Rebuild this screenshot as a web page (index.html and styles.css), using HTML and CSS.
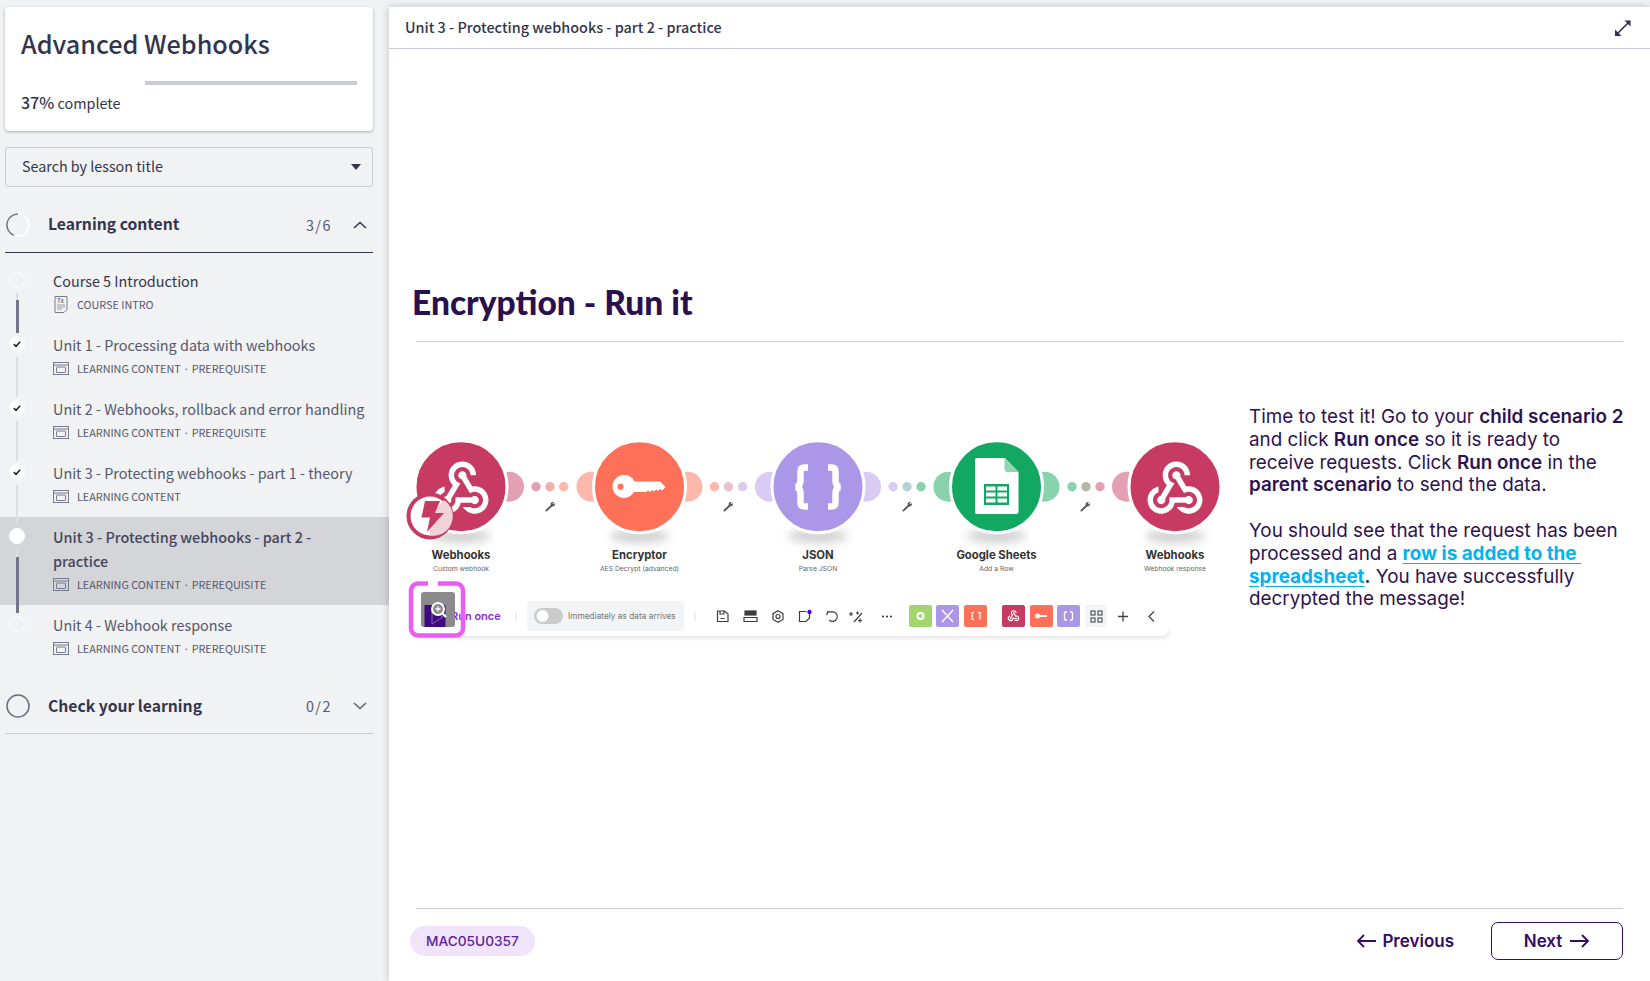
FILE: index.html
```html
<!DOCTYPE html>
<html lang="en">
<head>
    <meta charset="UTF-8">
    <meta name="viewport" content="width=device-width, initial-scale=1.0">
    <title>Advanced Webhooks</title>
    <link rel="stylesheet" href="styles.css">
</head>
<body>
    <svg class="defs" width="0" height="0">
        <symbol id="ic-lesson" viewBox="0 0 16 13">
            <rect x="0.5" y="0.5" width="15" height="12" fill="none" stroke="#777a8c"/>
            <path d="M0.5 3h15" stroke="#777a8c"/>
            <rect x="3.5" y="5" width="9" height="5.5" rx="0.5" fill="none" stroke="#777a8c"/>
        </symbol>
        <symbol id="ic-check" viewBox="0 0 16 16">
            <circle cx="8" cy="8" r="8" fill="#fff"/>
            <path d="M4.8 8.2l2.2 2.1 4.2-4.6" fill="none" stroke="#1d1f33" stroke-width="1.6"/>
        </symbol>
        <symbol id="ic-hook" viewBox="0 0 24 24">
            <path fill="#fff" d="M10 15l5.88 0c0.27-0.31 0.67-0.5 1.12-0.5c0.83 0 1.5 0.67 1.5 1.5c0 0.83-0.67 1.5-1.5 1.5c-0.44 0-0.84-0.19-1.12-0.5l-3.98 0c-0.46 2.28-2.48 4-4.9 4c-2.76 0-5-2.24-5-5c0-2.42 1.72-4.44 4-4.9l0 2.07c-1.16 0.41-2 1.53-2 2.83c0 1.65 1.35 3 3 3s3-1.35 3-3V15z M12.5 4c1.65 0 3 1.35 3 3h2c0-2.76-2.24-5-5-5l0 0c-2.76 0-5 2.24-5 5c0 1.43 0.6 2.71 1.55 3.62l-2.35 3.9C6.01 14.72 5.5 15.3 5.5 16c0 0.83 0.67 1.5 1.5 1.5s1.5-0.67 1.5-1.5c0-0.16-0.02-0.31-0.07-0.45l3.38-5.63C10.49 9.61 9.5 8.42 9.5 7C9.5 5.35 10.85 4 12.5 4z M17 13c-0.64 0-1.23 0.2-1.72 0.54l-3.05-5.07C11.53 8.35 11 7.74 11 7c0-0.83 0.67-1.5 1.5-1.5S14 6.17 14 7c0 0.15-0.02 0.29-0.06 0.43l2.19 3.65C16.41 11.03 16.7 11 17 11l0 0c2.76 0 5 2.24 5 5c0 2.76-2.24 5-5 5c-1.85 0-3.47-1.01-4.33-2.5l2.67 0C15.82 18.81 16.39 19 17 19c1.65 0 3-1.35 3-3S18.65 13 17 13z"/>
        </symbol>
        <symbol id="ic-wrench" viewBox="0 0 12 12">
            <path d="M1.5 10.5L7 5.2" stroke="#555" stroke-width="2" stroke-linecap="round"/>
            <path d="M6 3.6a3 3 0 0 1 4-2.4L8.3 3l0.8 0.9 1.8-1.6a3 3 0 0 1-3 3.8z" fill="#555"/>
        </symbol>
    </svg>

    <div class="page">
        <aside class="sidebar">
            <div class="course-card">
                <h1>Advanced Webhooks</h1>
                <div class="progress"><div class="progress-fill"></div></div>
                <p class="progress-text"><strong>37%</strong> complete</p>
            </div>

            <div class="search">
                <span>Search by lesson title</span>
                <span class="caret"></span>
            </div>

            <div class="section-head">
                <svg class="ring" width="24" height="24" viewBox="0 0 24 24">
                    <circle cx="12" cy="12" r="11" fill="none" stroke="#fff" stroke-width="1.5"/>
                    <path d="M12 1A11 11 0 0 0 7.8 22.2" fill="none" stroke="#6c6e80" stroke-width="1.5"/>
                </svg>
                <span class="section-title">Learning content</span>
                <span class="section-count">3/6</span>
                <svg class="chev" width="14" height="8" viewBox="0 0 14 8"><path d="M1 7l6-5.5L13 7" fill="none" stroke="#33354d" stroke-width="1.6"/></svg>
            </div>

            <ul class="lessons">
                <li class="lesson">
                    <div class="rail">
                        <span class="dot"></span>
                        <span class="line"><span class="line-fill fill-first"></span></span>
                    </div>
                    <div class="lesson-body">
                        <div class="lesson-title dark">Course 5 Introduction</div>
                        <div class="lesson-meta">
                            <svg class="doc-icon" width="16" height="17" viewBox="0 0 13 17">
                                <path d="M0.5 0.5h12v13l-3 3h-9z" fill="none" stroke="#777a8c"/>
                                <text x="2.4" y="6.5" class="doc-tx">Tx</text>
                                <path d="M2.5 9h8M2.5 11h8M2.5 13h5" stroke="#9a9caa"/>
                            </svg>
                            <span>COURSE INTRO</span>
                        </div>
                    </div>
                </li>
                <li class="lesson">
                    <div class="rail">
                        <svg class="dot-svg" width="16" height="16"><use href="#ic-check"/></svg>
                        <span class="line"></span>
                    </div>
                    <div class="lesson-body">
                        <div class="lesson-title">Unit 1 - Processing data with webhooks</div>
                        <div class="lesson-meta">
                            <svg width="16" height="13"><use href="#ic-lesson"/></svg>
                            <span>LEARNING CONTENT · PREREQUISITE</span>
                        </div>
                    </div>
                </li>
                <li class="lesson">
                    <div class="rail">
                        <svg class="dot-svg" width="16" height="16"><use href="#ic-check"/></svg>
                        <span class="line"></span>
                    </div>
                    <div class="lesson-body">
                        <div class="lesson-title">Unit 2 - Webhooks, rollback and error handling</div>
                        <div class="lesson-meta">
                            <svg width="16" height="13"><use href="#ic-lesson"/></svg>
                            <span>LEARNING CONTENT · PREREQUISITE</span>
                        </div>
                    </div>
                </li>
                <li class="lesson">
                    <div class="rail">
                        <svg class="dot-svg" width="16" height="16"><use href="#ic-check"/></svg>
                        <span class="line"></span>
                    </div>
                    <div class="lesson-body">
                        <div class="lesson-title">Unit 3 - Protecting webhooks - part 1 - theory</div>
                        <div class="lesson-meta">
                            <svg width="16" height="13"><use href="#ic-lesson"/></svg>
                            <span>LEARNING CONTENT</span>
                        </div>
                    </div>
                </li>
                <li class="lesson active">
                    <div class="rail">
                        <span class="dot solid"></span>
                        <span class="line"><span class="line-fill fill-active"></span></span>
                    </div>
                    <div class="lesson-body">
                        <div class="lesson-title">Unit 3 - Protecting webhooks - part 2 - practice</div>
                        <div class="lesson-meta">
                            <svg width="16" height="13"><use href="#ic-lesson"/></svg>
                            <span>LEARNING CONTENT · PREREQUISITE</span>
                        </div>
                    </div>
                </li>
                <li class="lesson">
                    <div class="rail">
                        <span class="dot"></span>
                    </div>
                    <div class="lesson-body">
                        <div class="lesson-title">Unit 4 - Webhook response</div>
                        <div class="lesson-meta">
                            <svg width="16" height="13"><use href="#ic-lesson"/></svg>
                            <span>LEARNING CONTENT · PREREQUISITE</span>
                        </div>
                    </div>
                </li>
            </ul>

            <div class="section-head closed">
                <svg class="ring" width="24" height="24" viewBox="0 0 24 24">
                    <circle cx="12" cy="12" r="11" fill="none" stroke="#6c6e80" stroke-width="1.5"/>
                </svg>
                <span class="section-title">Check your learning</span>
                <span class="section-count">0/2</span>
                <svg class="chev" width="14" height="8" viewBox="0 0 14 8"><path d="M1 1l6 5.5L13 1" fill="none" stroke="#5c5e72" stroke-width="1.4"/></svg>
            </div>
        </aside>

        <main class="main">
            <header class="main-head">
                <span class="main-head-title">Unit 3 - Protecting webhooks - part 2 - practice</span>
                <svg width="18" height="18" viewBox="0 0 18 18">
                    <path d="M2 16L16 2" stroke="#2f3150" stroke-width="1.6"/>
                    <path d="M10.5 1.5h6v6zM1 10.5v6.500h6.500z" fill="#2f3150"/>
                </svg>
            </header>

            <div class="content">
                <h2>Encryption - Run it</h2>
                <hr class="rule">

                <div class="lesson-row">
                    <svg class="scenario" width="840" height="220" viewBox="400 430 840 220">
                        <defs>
                            <filter id="blur6" x="-50%" y="-100%" width="200%" height="300%"><feGaussianBlur stdDeviation="5"/></filter>
                            <filter id="blur-bar" x="-5%" y="-50%" width="110%" height="200%"><feGaussianBlur stdDeviation="3"/></filter>
                        </defs>

                        <!-- toolbar -->
                        <rect x="420" y="630" width="748" height="7" fill="#000" opacity="0.14" filter="url(#blur-bar)"/>
                        <rect x="405" y="596" width="763" height="40" rx="6" fill="#fff"/>

                        <!-- shadows under the modules -->
                        <ellipse cx="461" cy="536" rx="30" ry="7" fill="#000" opacity="0.18" filter="url(#blur6)"/>
                        <ellipse cx="639.500" cy="536" rx="30" ry="7" fill="#000" opacity="0.18" filter="url(#blur6)"/>
                        <ellipse cx="818" cy="536" rx="30" ry="7" fill="#000" opacity="0.18" filter="url(#blur6)"/>
                        <ellipse cx="996.500" cy="536" rx="30" ry="7" fill="#000" opacity="0.18" filter="url(#blur6)"/>
                        <ellipse cx="1175" cy="536" rx="30" ry="7" fill="#000" opacity="0.18" filter="url(#blur6)"/>

                        <!-- connector ends -->
                        <circle cx="509" cy="486.700" r="15" fill="#e39fb4"/>
                        <circle cx="591.500" cy="486.700" r="15" fill="#fdb8a9"/>
                        <circle cx="687.500" cy="486.700" r="15" fill="#fdb8a9"/>
                        <circle cx="770" cy="486.700" r="15" fill="#d9cbf3"/>
                        <circle cx="866" cy="486.700" r="15" fill="#d9cbf3"/>
                        <circle cx="948.500" cy="486.700" r="15" fill="#88d2ae"/>
                        <circle cx="1044.500" cy="486.700" r="15" fill="#88d2ae"/>
                        <circle cx="1127" cy="486.700" r="15" fill="#e39fb4"/>

                        <!-- dots -->
                        <circle cx="536" cy="486.700" r="4.700" fill="#e39fb4"/>
                        <circle cx="550" cy="486.700" r="4.700" fill="#f2aeac"/>
                        <circle cx="563.700" cy="486.700" r="4.700" fill="#fdb8a9"/>
                        <circle cx="714.500" cy="486.700" r="4.700" fill="#fdb8a9"/>
                        <circle cx="728.500" cy="486.700" r="4.700" fill="#ecc0cc"/>
                        <circle cx="742.500" cy="486.700" r="4.700" fill="#d9cbf3"/>
                        <circle cx="893" cy="486.700" r="4.700" fill="#d9cbf3"/>
                        <circle cx="907" cy="486.700" r="4.700" fill="#b2d1d8"/>
                        <circle cx="921" cy="486.700" r="4.700" fill="#88d2ae"/>
                        <circle cx="1072" cy="486.700" r="4.700" fill="#88d2ae"/>
                        <circle cx="1086" cy="486.700" r="4.700" fill="#b6b6a9"/>
                        <circle cx="1100" cy="486.700" r="4.700" fill="#e39fb4"/>

                        <use href="#ic-wrench" x="545" y="501" width="11" height="11"/>
                        <use href="#ic-wrench" x="723" y="501" width="11" height="11"/>
                        <use href="#ic-wrench" x="902" y="501" width="11" height="11"/>
                        <use href="#ic-wrench" x="1080" y="501" width="11" height="11"/>

                        <!-- modules -->
                        <circle cx="461" cy="486.700" r="46" fill="#c73a63" stroke="#fff" stroke-width="3"/>
                        <circle cx="639.500" cy="486.700" r="46" fill="#ff7059" stroke="#fff" stroke-width="3"/>
                        <circle cx="818" cy="486.700" r="46" fill="#ab97e8" stroke="#fff" stroke-width="3"/>
                        <circle cx="996.500" cy="486.700" r="46" fill="#12a862" stroke="#fff" stroke-width="3"/>
                        <circle cx="1175" cy="486.700" r="46" fill="#c73a63" stroke="#fff" stroke-width="3"/>

                        <use href="#ic-hook" x="428" y="456" width="66" height="66"/>
                        <use href="#ic-hook" x="1142" y="456" width="66" height="66"/>

                        <!-- key -->
                        <path fill="#fff" d="M625 475a11.500 11.500 0 0 1 9.500 6.500h25.500l5.500 5.500l-3.500 3.500l-2-1.500l-2 2l-2-1.500l-2 2l-2-1.500l-2 2l-2-1.500l-2 1.500h-12a11.500 11.500 0 1 1-9.500-17z"/>
                        <circle cx="620.500" cy="486.700" r="3" fill="#ff7059"/>

                        <!-- braces -->
                        <path d="M808 467.500h-3.500q-4 0 -4 4v9q0 5.500 -4.500 6.500q4.500 1 4.500 6.500v9q0 4 4 4h3.500M828 467.500h3.500q4 0 4 4v9q0 5.500 4.500 6.500q-4.500 1 -4.500 6.500v9q0 4 -4 4h-3.500" fill="none" stroke="#fff" stroke-width="6.500"/>

                        <!-- sheet -->
                        <path d="M977 458h28l13.500 14v40a2 2 0 0 1-2 2h-39.500a2 2 0 0 1-2-2v-52a2 2 0 0 1 2-2z" fill="#fff"/>
                        <path d="M1004.500 458l14 14h-11a3 3 0 0 1-3-3z" fill="#8fd6b1"/>
                        <rect x="984" y="484" width="25" height="21" fill="#12a862"/>
                        <g fill="#fff">
                            <rect x="986" y="486.500" width="9.500" height="4"/>
                            <rect x="997.500" y="486.500" width="9.500" height="4"/>
                            <rect x="986" y="492.500" width="9.500" height="4"/>
                            <rect x="997.500" y="492.500" width="9.500" height="4"/>
                            <rect x="986" y="498.500" width="9.500" height="4"/>
                            <rect x="997.500" y="498.500" width="9.500" height="4"/>
                        </g>

                        <!-- trigger badge -->
                        <circle cx="430" cy="516" r="23.500" fill="#c73a63"/>
                        <circle cx="430" cy="516" r="19.500" fill="#fff"/>
                        <path d="M430 516L444 500A19.500 19.500 0 0 1 430 535.500z" fill="#f1d2db"/>
                        <path d="M425 501h15l-5 12h9l-17 19l3-14.500h-8.500z" fill="#c73a63"/>

                        <!-- labels -->
                        <text x="461" y="559" class="mod-name" text-anchor="middle">Webhooks</text>
                        <text x="461" y="571" class="mod-sub" text-anchor="middle">Custom webhook</text>
                        <text x="639.500" y="559" class="mod-name" text-anchor="middle">Encryptor</text>
                        <text x="639.500" y="571" class="mod-sub" text-anchor="middle">AES Decrypt (advanced)</text>
                        <text x="818" y="559" class="mod-name" text-anchor="middle">JSON</text>
                        <text x="818" y="571" class="mod-sub" text-anchor="middle">Parse JSON</text>
                        <text x="996.500" y="559" class="mod-name" text-anchor="middle">Google Sheets</text>
                        <text x="996.500" y="571" class="mod-sub" text-anchor="middle">Add a Row</text>
                        <text x="1175" y="559" class="mod-name" text-anchor="middle">Webhooks</text>
                        <text x="1175" y="571" class="mod-sub" text-anchor="middle">Webhook response</text>

                        <!-- toolbar contents -->
                        <text x="451" y="620" class="run-once">Run once</text>
                        <path d="M516 612v9M695 612v9" stroke="#ddd"/>
                        <rect x="527" y="601" width="157" height="30" rx="4" fill="#f3f4f6"/>
                        <rect x="534" y="608" width="29" height="16" rx="8" fill="#cbcbcb"/>
                        <circle cx="542.500" cy="616" r="6" fill="#fff"/>
                        <text x="568" y="619" class="run-mode">Immediately as data arrives</text>

                        <g fill="none" stroke="#3d3d3d" stroke-width="1.200">
                            <path d="M717.500 611h7l3.500 3v7.500h-10.500zM720 611v3h4v-3M720.500 618.500h4"/>
                            <rect x="745" y="611" width="11" height="4" fill="#3d3d3d"/>
                            <path d="M744 617.500h13v4h-13z"/>
                            <circle cx="778" cy="616.500" r="2"/>
                            <path d="M778 610.800l5 2.900v5.700l-5 2.900l-5-2.900v-5.700z"/>
                            <path d="M809.500 612v6l-3.500 3.500h-6.500v-10h7"/>
                            <path d="M828 612l-1.500 3M827 611.800h6a4.800 4.800 0 1 1-3.800 8.200"/>
                            <path d="M854 622l8-9M851 612v4M849 614h4M860 618.500v4M858 620.500h4M857.500 611.500v3M856 613h3"/>
                        </g>
                        <circle cx="809.500" cy="612" r="2.200" fill="#5a00c8"/>
                        <g fill="#3d3d3d">
                            <circle cx="883" cy="616.500" r="1.100"/>
                            <circle cx="887" cy="616.500" r="1.100"/>
                            <circle cx="891" cy="616.500" r="1.100"/>
                        </g>

                        <rect x="909" y="605" width="23" height="22" rx="2" fill="#a3d66e"/>
                        <circle cx="920.500" cy="616" r="3" fill="none" stroke="#fff" stroke-width="2"/>
                        <rect x="936" y="605" width="23" height="22" rx="2" fill="#ab97e8"/>
                        <path d="M942 610l4.500 5M953 610l-4.500 5M942 622l11-12M953 622l-5-5.500" stroke="#fff" stroke-width="1.500"/>
                        <rect x="964" y="605" width="23" height="22" rx="2" fill="#ff7059"/>
                        <path d="M974 612.500h-2v7h2M978 612.500h2v7" fill="none" stroke="#fff" stroke-width="1.200"/>
                        <rect x="1002" y="605" width="23" height="22" rx="2" fill="#c73a63"/>
                        <use href="#ic-hook" x="1006.500" y="609" width="14" height="14"/>
                        <rect x="1030" y="605" width="23" height="22" rx="2" fill="#ff7059"/>
                        <circle cx="1037.500" cy="616" r="2.500" fill="#fff"/>
                        <path d="M1039 616h8" stroke="#fff" stroke-width="2"/>
                        <rect x="1057" y="605" width="23" height="22" rx="2" fill="#ab97e8"/>
                        <path d="M1067 612h-1.500q-1 0 -1 1v6q0 1 1 1h1.500M1070 612h1.500q1 0 1 1v6q0 1 -1 1h-1.500" fill="none" stroke="#fff" stroke-width="1.300"/>
                        <rect x="1085" y="605" width="22" height="22" rx="2" fill="#f3f4f6"/>
                        <g fill="none" stroke="#555" stroke-width="1.200">
                            <rect x="1091" y="611" width="4" height="4"/>
                            <rect x="1098" y="611" width="4" height="4"/>
                            <rect x="1091" y="618" width="4" height="4"/>
                            <rect x="1098" y="618" width="4" height="4"/>
                        </g>
                        <path d="M1123 611.500v10M1118 616.500h10M1154 611.500l-5 5l5 5" fill="none" stroke="#444" stroke-width="1.300"/>

                        <!-- zoom overlay on the run button -->
                        <path d="M428 583.500h-10a7 7 0 0 0-7 7v38a7 7 0 0 0 7 7h38a7 7 0 0 0 7-7v-38a7 7 0 0 0-7-7h-18" fill="none" stroke="#ea5cf4" stroke-width="4.500"/>
                        <rect x="421" y="592" width="34" height="35" rx="3" fill="#8b8b8b"/>
                        <path d="M424.500 605h21v22h-21z" fill="#3e0a80"/>
                        <path d="M432 611l11 6l-11 7z" fill="none" stroke="#8b5fc0" stroke-width="1"/>
                        <circle cx="438" cy="609" r="6" fill="#8b8b8b" stroke="#fff" stroke-width="2"/>
                        <path d="M435.500 609h5M438 606.500v5" stroke="#fff" stroke-width="1.400"/>
                        <path d="M442.500 613.500l3.500 3.500" stroke="#fff" stroke-width="2.400"/>
                    </svg>

                    <div class="lesson-copy">
                        <p class="copy-para">
                            <span class="copy-line">Time to test it! Go to your <b>child scenario 2</b></span>
                            <span class="copy-line">and click <b>Run once</b> so it is ready to</span>
                            <span class="copy-line">receive requests. Click <b>Run once</b> in the</span>
                            <span class="copy-line"><b>parent scenario</b> to send the data.</span>
                        </p>
                        <p class="copy-para">
                            <span class="copy-line">You should see that the request has been</span>
                            <span class="copy-line">processed and a <a href="#" class="copy-link">row is added to the&nbsp;</a></span>
                            <span class="copy-line"><a href="#" class="copy-link">spreadsheet</a><b>.</b> You have successfully</span>
                            <span class="copy-line">decrypted the message!</span>
                        </p>
                    </div>
                </div>
            </div>

            <footer class="main-foot">
                <span class="code-pill">MAC05U0357</span>
                <div class="nav-btns">
                    <a href="#" class="nav-prev">
                        <svg width="20" height="14" viewBox="0 0 20 14"><path d="M20 7H2M8 1L2 7l6 6" fill="none" stroke="#360a66" stroke-width="1.800"/></svg>
                        Previous
                    </a>
                    <a href="#" class="nav-next">
                        Next
                        <svg width="20" height="14" viewBox="0 0 20 14"><path d="M0 7h18M12 1l6 6l-6 6" fill="none" stroke="#360a66" stroke-width="1.800"/></svg>
                    </a>
                </div>
            </footer>
        </main>
    </div>
</body>
</html>
```

FILE: styles.css
```css
* {
    box-sizing: border-box;
}

body {
    margin: 0;
    background-color: #f1f2f4;
    font-family: "Noto Sans CJK JP", "Noto Sans", sans-serif;
    color: #33354d;
    overflow: hidden;
}

.defs {
    position: absolute;
}

.page {
    display: flex;
    height: 981px;
}

/* sidebar */
.sidebar {
    width: 389px;
    flex-shrink: 0;
}

.course-card {
    margin: 7px 16px 0 5px;
    height: 124px;
    padding: 19px 16px 0;
    background-color: #fff;
    border-radius: 4px;
    box-shadow: 0 1px 3px rgba(0, 0, 0, 0.3);
}

.course-card h1 {
    margin: 0;
    font-size: 25.200px;
    line-height: 34px;
    font-weight: 500;
}

.progress {
    height: 4px;
    margin-top: 21px;
    background-color: #c9cbd8;
}

.progress-fill {
    width: 37%;
    height: 100%;
    background-color: #fff;
}

.progress-text {
    margin: 5px 0 0;
    font-size: 14.400px;
    line-height: 24px;
}

.progress-text strong {
    font-size: 16px;
    font-weight: 500;
}

.search {
    display: flex;
    justify-content: space-between;
    align-items: center;
    height: 40px;
    margin: 16px 16px 0 5px;
    padding: 0 11px 4px 16px;
    border: 1px solid #c9cbd8;
    border-radius: 3px;
    font-size: 14.300px;
}

.caret {
    margin-top: 3px;
    border-left: 5px solid transparent;
    border-right: 5px solid transparent;
    border-top: 6px solid #33354d;
}

.section-head {
    display: flex;
    align-items: center;
    height: 56px;
    margin: 10px 16px 0 5px;
    padding: 0 6px 0 1px;
    border-bottom: 1px solid #33354d;
}

.section-head.closed {
    margin-top: 9px;
    border-bottom-color: #c9cbd8;
}

.section-title {
    flex: 1;
    margin-left: 18px;
    padding-bottom: 3px;
    font-size: 15.700px;
    font-weight: 700;
}

.closed .section-title {
    padding-bottom: 1px;
}

.section-count {
    margin-right: 21px;
    padding-bottom: 1px;
    font-size: 14.400px;
    letter-spacing: 1.500px;
    color: #55586b;
}

.lessons {
    list-style: none;
    margin: 8px 0 0;
    padding: 0;
}

.lesson {
    display: flex;
    padding-left: 9px;
}

.lesson.active {
    background-color: #d4d5d9;
}

.rail {
    display: flex;
    flex-direction: column;
    align-items: center;
    width: 16px;
    flex-shrink: 0;
    padding-top: 11px;
}

.dot,
.dot-svg {
    flex-shrink: 0;
    display: block;
    width: 16px;
    height: 16px;
    border-radius: 50%;
}

.dot {
    border: 1px solid #fff;
}

.dot.solid {
    background-color: #fff;
}

.line {
    flex: 1;
    display: flex;
    flex-direction: column;
    justify-content: flex-end;
    width: 2px;
    margin: 5px 0 -8px;
    background-color: #dcdde2;
}

.line-fill {
    display: block;
    flex-shrink: 0;
    width: 3px;
    background-color: #73758a;
}

.fill-first {
    height: 33px;
}

.fill-active {
    height: 56px;
}

.lesson-body {
    padding: 8px 20px 10px 28px;
}

.lesson-title {
    font-size: 14.400px;
    line-height: 24px;
    color: #55586b;
}

.lesson-title.dark {
    color: #33354d;
}

.active .lesson-title {
    font-weight: 500;
    color: #44465c;
}

.lesson-meta {
    display: flex;
    align-items: center;
    gap: 8px;
    height: 22px;
    font-size: 10.800px;
    color: #55586b;
}

.doc-tx {
    font-size: 6px;
    font-weight: 700;
    fill: #777a8c;
}

/* main panel */
.main {
    flex: 1;
    display: flex;
    flex-direction: column;
    margin-top: 7px;
    background-color: #fff;
    box-shadow: 0 0 8px rgba(0, 0, 0, 0.2);
}

.main-head {
    display: flex;
    justify-content: space-between;
    align-items: center;
    height: 42px;
    padding: 0 18px 0 16px;
    border-bottom: 1px solid #c9cbd8;
    font-size: 14.400px;
    font-weight: 500;
    color: #33354d;
}

.main-head-title {
    padding-bottom: 2px;
}

.content {
    flex: 1;
    padding-top: 233px;
}

.content h2 {
    margin: 0 0 0 23px;
    font-family: Lato, sans-serif;
    font-size: 33.500px;
    line-height: 40px;
    font-weight: 900;
    color: #2b1050;
}

.rule {
    height: 1px;
    margin: 19px 27px 0;
    border: 0;
    background-color: #cfcfcf;
}

.lesson-row {
    display: flex;
    align-items: flex-start;
    margin-top: 64px;
    padding-left: 11px;
}

.scenario {
    flex-shrink: 0;
    margin-top: 24px;
}

.mod-name {
    font-family: Inter, sans-serif;
    font-size: 11.300px;
    font-weight: 700;
    fill: #333;
}

.mod-sub {
    font-family: Inter, sans-serif;
    font-size: 6.800px;
    fill: #666;
}

.run-once {
    font-family: Inter, sans-serif;
    font-size: 11px;
    font-weight: 600;
    fill: #8a2be2;
}

.run-mode {
    font-family: Inter, sans-serif;
    font-size: 8.300px;
    fill: #777;
}

.lesson-copy {
    flex-shrink: 0;
    margin-left: 9px;
    font-family: Inter, sans-serif;
    font-size: 18.850px;
    line-height: 22.800px;
    color: #2d1350;
}

.copy-para {
    margin: 0 0 22.800px;
}

.copy-line {
    display: block;
    white-space: nowrap;
}

.lesson-copy b {
    font-weight: 600;
}

.copy-link {
    font-weight: 700;
    color: #00b5f0;
    text-underline-offset: 3px;
}

.main-foot {
    display: flex;
    justify-content: space-between;
    align-items: center;
    height: 66px;
    margin: 0 27px 7px 21px;
    position: relative;
}

.main-foot::before {
    content: "";
    position: absolute;
    top: 0;
    left: 6px;
    right: 0;
    height: 1px;
    background-color: #cfcaca;
}

.code-pill {
    padding: 0 16px;
    height: 30px;
    line-height: 30px;
    border-radius: 15px;
    background-color: #f0e4fb;
    font-family: Inter, sans-serif;
    font-size: 13.700px;
    font-weight: 500;
    color: #5d2299;
}

.nav-btns {
    display: flex;
    align-items: center;
    gap: 37px;
    font-family: Inter, sans-serif;
    font-size: 17px;
    font-weight: 600;
}

.nav-btns a {
    display: flex;
    align-items: center;
    gap: 6px;
    color: #360a66;
    text-decoration: none;
}

.nav-btns .nav-next {
    justify-content: center;
    gap: 8px;
    width: 132px;
    height: 38px;
    border: 1.500px solid #360a66;
    border-radius: 7px;
}
```
